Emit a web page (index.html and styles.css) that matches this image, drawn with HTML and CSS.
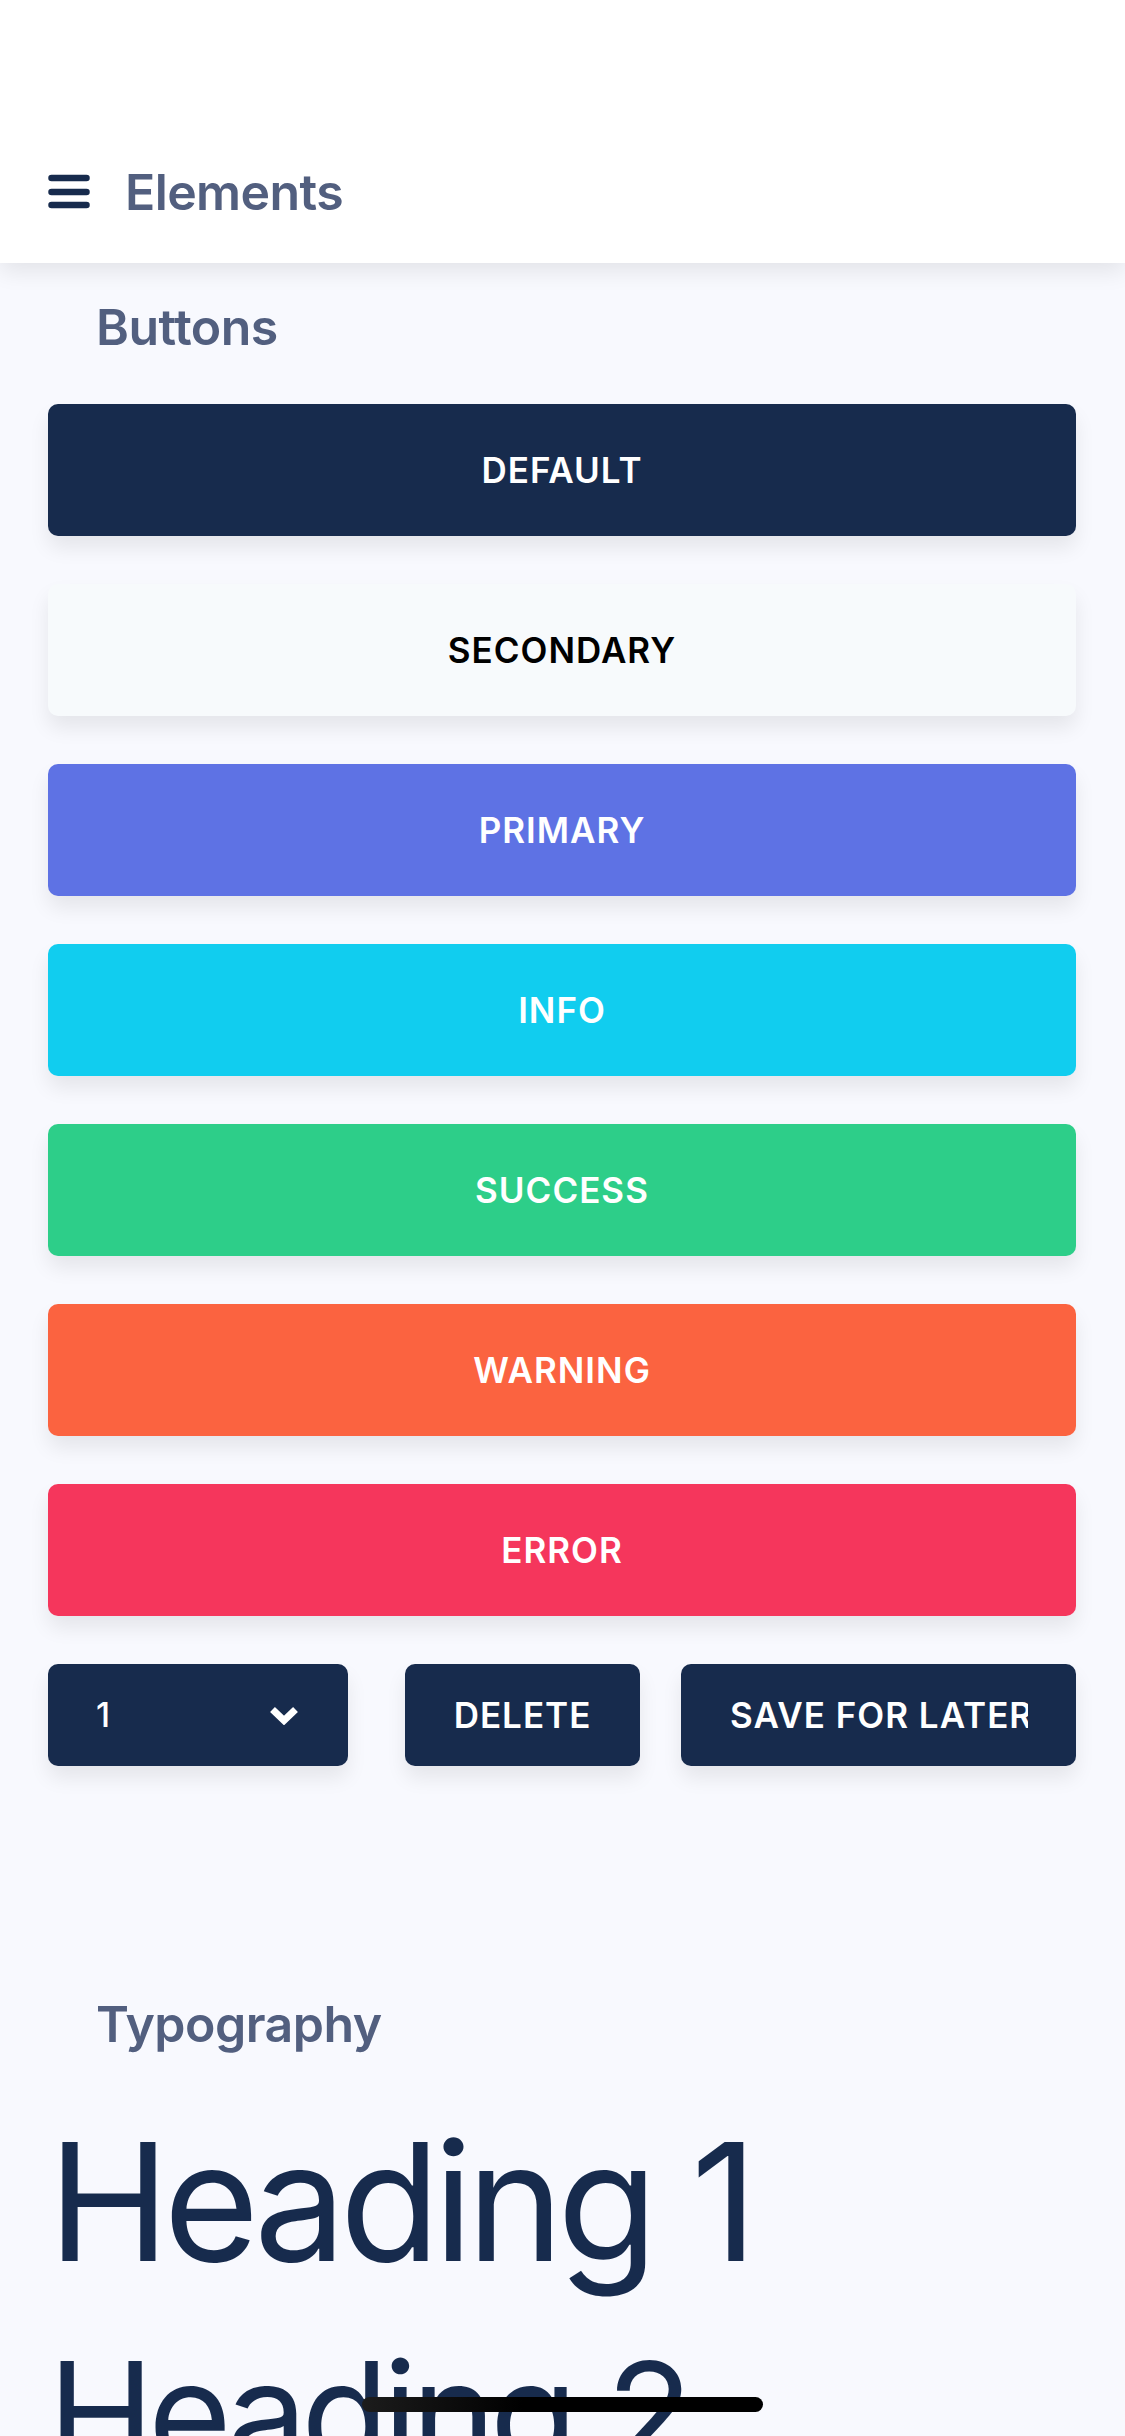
FILE: index.html
```html
<!DOCTYPE html>
<html lang="en">
<head>
<meta charset="utf-8">
<title>Elements</title>
<link rel="stylesheet" href="styles.css">
</head>
<body>
<div class="screen">
  <header class="navbar">
    <div class="nav-row">
      <svg class="menu-icon" width="42" height="36" viewBox="0 0 42 36">
        <g stroke="#172b4d" stroke-width="6.5" stroke-linecap="round">
          <line x1="3.5" y1="4" x2="38.5" y2="4"/>
          <line x1="3.5" y1="18" x2="38.5" y2="18"/>
          <line x1="3.5" y1="31" x2="38.5" y2="31"/>
        </g>
      </svg>
      <span class="nav-title">Elements</span>
    </div>
  </header>

  <main class="content">
    <h2 class="section-title">Buttons</h2>
    <div class="button-list">
      <div class="btn btn-default">DEFAULT</div>
      <div class="btn btn-secondary">SECONDARY</div>
      <div class="btn btn-primary">PRIMARY</div>
      <div class="btn btn-info">INFO</div>
      <div class="btn btn-success">SUCCESS</div>
      <div class="btn btn-warning">WARNING</div>
      <div class="btn btn-error">ERROR</div>
    </div>

    <div class="action-row">
      <div class="select">
        <span class="select-value">1</span>
        <svg class="chevron" width="30" height="20" viewBox="0 0 30 20">
          <polyline points="3.5,4.5 15,15.5 26.5,4.5" fill="none" stroke="#ffffff" stroke-width="7" stroke-linejoin="miter" stroke-linecap="butt"/>
        </svg>
      </div>
      <div class="small-btn btn-delete"><span class="small-label">DELETE</span></div>
      <div class="small-btn btn-save"><span class="small-label">SAVE FOR LATER</span></div>
    </div>

    <h2 class="section-title typo-title">Typography</h2>
    <h1 class="heading-1">Heading 1</h1>
    <h2 class="heading-2">Heading 2</h2>
  </main>

  <div class="home-indicator"></div>
</div>
</body>
</html>
```

FILE: styles.css
```css
* {
  box-sizing: border-box;
}

html, body {
  margin: 0;
  padding: 0;
}

body {
  width: 1125px;
  height: 2436px;
  overflow: hidden;
  background: #f8f9fe;
  font-family: "Inter", "Noto Sans", sans-serif;
  color: #172b4d;
}

.screen {
  position: relative;
  width: 1125px;
  height: 2436px;
  overflow: hidden;
}

.navbar {
  position: relative;
  z-index: 2;
  height: 263px;
  background: #ffffff;
  display: flex;
  align-items: flex-end;
  padding: 0 48px 41px 48px;
  box-shadow: 0 8px 22px rgba(0, 0, 0, 0.09);
}

.nav-row {
  display: flex;
  align-items: center;
  height: 60px;
}

.menu-icon {
  display: block;
  margin-right: 35px;
}

.nav-title {
  font-size: 50px;
  line-height: 60px;
  font-weight: 600;
  letter-spacing: -0.6px;
  color: #525f7f;
}

.content {
  display: flex;
  flex-direction: column;
  padding: 34px 49px 0 48px;
}

.section-title {
  margin: 0;
  padding-left: 48px;
  font-size: 50px;
  line-height: 60px;
  font-weight: 600;
  letter-spacing: -0.5px;
  color: #525f7f;
}

.button-list {
  display: flex;
  flex-direction: column;
  gap: 48px;
  margin-top: 47px;
}

.btn {
  height: 132px;
  border-radius: 10px;
  display: flex;
  align-items: center;
  justify-content: center;
  font-size: 35px;
  font-weight: 600;
  letter-spacing: 1px;
  color: #ffffff;
  box-shadow: 0 12px 20px rgba(0, 0, 0, 0.08);
}

.btn-default { background: #172b4d; }
.btn-secondary { background: #f7fafc; color: #000000; }
.btn-primary { background: #5e72e4; }
.btn-info { background: #11cdef; }
.btn-success { background: #2dce89; }
.btn-warning { background: #fb6340; }
.btn-error { background: #f5365c; }

.action-row {
  display: flex;
  margin-top: 48px;
  height: 102px;
}

.select {
  width: 300px;
  margin-right: 57px;
  height: 102px;
  border-radius: 10px;
  background: #172b4d;
  display: flex;
  align-items: center;
  justify-content: space-between;
  padding: 0 49px 0 48px;
  box-shadow: 0 12px 20px rgba(0, 0, 0, 0.08);
}

.select-value {
  font-size: 34px;
  font-weight: 500;
  color: #ffffff;
  line-height: 40px;
}

.chevron {
  display: block;
}

.small-btn {
  height: 102px;
  border-radius: 10px;
  background: #172b4d;
  display: flex;
  align-items: center;
  box-shadow: 0 12px 20px rgba(0, 0, 0, 0.08);
  overflow: hidden;
}

.btn-delete {
  width: 235px;
  margin-right: 41px;
  justify-content: center;
}

.btn-save {
  flex: 1;
  padding: 0 48px 0 49px;
}

.small-label {
  display: block;
  white-space: nowrap;
  overflow: hidden;
  font-size: 35px;
  line-height: 44px;
  font-weight: 600;
  letter-spacing: 1px;
  color: #ffffff;
}

.typo-title {
  margin-top: 228px;
}

.heading-1 {
  margin: 49px 0 0 0;
  font-size: 164px;
  line-height: 197px;
  font-weight: 400;
  letter-spacing: -6.5px;
  color: #172b4d;
}

.heading-2 {
  margin: 27px 0 0 0;
  font-size: 143px;
  line-height: 172px;
  font-weight: 400;
  letter-spacing: -6px;
  color: #172b4d;
}

.home-indicator {
  position: absolute;
  left: 362px;
  bottom: 24px;
  width: 401px;
  height: 15px;
  border-radius: 8px;
  background: linear-gradient(90deg, #1c1c1c 0%, #000000 40%, #000000 100%);
  z-index: 3;
}
```
